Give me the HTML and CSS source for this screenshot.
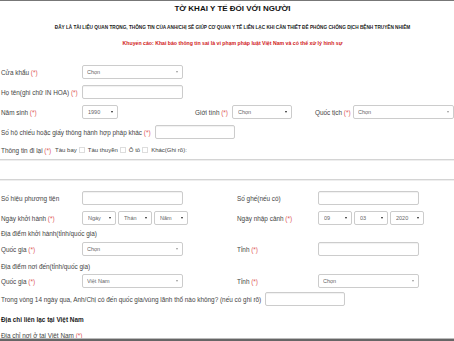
FILE: index.html
```html
<!DOCTYPE html>
<html lang="vi">

<head>
    <meta charset="UTF-8">
    <meta name="viewport" content="width=device-width, initial-scale=1.0">
    <title>Tờ khai y tế</title>
    <link rel="stylesheet" href="styles.css">
</head>

<body>
<div class="wrap">
    <h1 class="title">TỜ KHAI Y TẾ ĐỐI VỚI NGƯỜI</h1>
    <p class="note">ĐÂY LÀ TÀI LIỆU QUAN TRỌNG, THÔNG TIN CỦA ANH/CHỊ SẼ GIÚP CƠ QUAN Y TẾ LIÊN LẠC KHI CẦN THIẾT ĐỂ PHÒNG CHỐNG DỊCH BỆNH TRUYỀN NHIỄM</p>
    <p class="warn">Khuyến cáo: Khai báo thông tin sai là vi phạm pháp luật Việt Nam và có thể xử lý hình sự</p>

    <div class="form">
        <div class="row">
            <label class="lbl">Cửa khẩu <i>(*)</i></label>
            <div class="sel big light"><select><option>Chọn</option></select></div>
        </div>
        <div class="row">
            <label class="lbl">Họ tên(ghi chữ IN HOA) <i>(*)</i></label>
            <input class="txt" type="text">
        </div>
        <div class="row">
            <label class="lbl">Năm sinh <i>(*)</i></label>
            <div class="sel year"><select><option>1990</option></select></div>
            <label class="lbl gender">Giới tính <i>(*)</i></label>
            <div class="sel mid"><select><option>Chọn</option></select></div>
            <label class="lbl nation">Quốc tịch <i>(*)</i></label>
            <div class="sel big light"><select><option>Chọn</option></select></div>
        </div>
        <div class="row">
            <label class="lbl auto">Số hộ chiếu hoặc giấy thông hành hợp pháp khác <i>(*)</i></label>
            <input class="txt short" type="text">
        </div>
        <div class="row travel">
            <label class="lbl auto">Thông tin đi lại <i>(*)</i></label>
            <span class="opt">Tàu bay <input type="checkbox"></span>
            <span class="opt">Tàu thuyền <input type="checkbox"></span>
            <span class="opt">Ô tô <input type="checkbox"></span>
            <span class="opt">Khác(Ghi rõ):</span>
        </div>
        <hr class="line">
        <hr class="line second">

        <div class="row">
            <div class="half">
                <label class="lbl">Số hiệu phương tiện</label>
                <input class="txt" type="text">
            </div>
            <label class="lbl">Số ghế(nếu có)</label>
            <input class="txt" type="text">
        </div>
        <div class="row">
            <div class="half">
                <label class="lbl">Ngày khởi hành <i>(*)</i></label>
                <div class="dates">
                    <div class="sel day"><select><option>Ngày</option></select></div>
                    <div class="sel day"><select><option>Thán</option></select></div>
                    <div class="sel day"><select><option>Năm</option></select></div>
                </div>
            </div>
            <label class="lbl">Ngày nhập cảnh <i>(*)</i></label>
            <div class="dates">
                <div class="sel day"><select><option>09</option></select></div>
                <div class="sel day"><select><option>03</option></select></div>
                <div class="sel day"><select><option>2020</option></select></div>
            </div>
        </div>
        <div class="row caption">Địa điểm khởi hành(tỉnh/quốc gia)</div>
        <div class="row">
            <div class="half">
                <label class="lbl">Quốc gia <i>(*)</i></label>
                <div class="sel big light"><select><option>Chọn</option></select></div>
            </div>
            <label class="lbl">Tỉnh <i>(*)</i></label>
            <input class="txt" type="text">
        </div>
        <div class="row caption tall">Địa điểm nơi đến(tỉnh/quốc gia)</div>
        <div class="row mid-row">
            <div class="half">
                <label class="lbl">Quốc gia <i>(*)</i></label>
                <div class="sel big light"><select><option>Việt Nam</option></select></div>
            </div>
            <label class="lbl">Tỉnh <i>(*)</i></label>
            <div class="sel big light"><select><option>Chọn</option></select></div>
        </div>
        <div class="row">
            <label class="lbl auto">Trong vòng 14 ngày qua, Anh/Chị có đến quốc gia/vùng lãnh thổ nào không? (nếu có ghi rõ)</label>
            <input class="txt short" type="text">
        </div>
        <div class="row section">Địa chỉ liên lạc tại Việt Nam</div>
        <div class="row last">
            <label class="lbl auto">Địa chỉ nơi ở tại Việt Nam <i>(*)</i></label>
        </div>
    </div>
</div>
<div class="bottombar"></div>
</body>

</html>
```

FILE: styles.css
```css
* {
    margin: 0;
    padding: 0;
    box-sizing: border-box;
}

html {
    border-top: 1px solid #777;
}

body {
    font-family: "Liberation Sans", Arial, sans-serif;
    font-size: 6.4px;
    color: #444;
    background: #fff;
    overflow: hidden;
    height: 340px;
}

.wrap {
    width: 464px;
    padding-left: 1px;
}

.title {
    margin-top: 3px;
    font-size: 8px;
    line-height: 10px;
    text-align: center;
    color: #111;
}

.note {
    margin-top: 10px;
    font-size: 4.7px;
    line-height: 8px;
    font-weight: bold;
    text-align: center;
    color: #222;
}

.warn {
    margin-top: 7px;
    font-size: 5.2px;
    line-height: 8px;
    font-weight: bold;
    text-align: center;
    color: #d01818;
}

.form {
    margin-top: 15px;
}

.row {
    display: flex;
    align-items: center;
    height: 20px;
}

.row.travel {
    height: 16px;
}

.row.caption {
    height: 11px;
}

.row.caption.tall {
    height: 14px;
}

.row.mid-row {
    height: 16px;
}

.row.section {
    font-weight: bold;
    color: #222;
}

.row.last {
    height: 12px;
}

.half {
    display: flex;
    align-items: center;
    width: 236px;
}

.lbl {
    width: 81px;
    flex-shrink: 0;
    white-space: nowrap;
}

.lbl i {
    font-style: normal;
    color: #e05a5a;
}

.lbl.auto {
    width: auto;
    margin-right: 4px;
}

.lbl.gender {
    width: 37px;
    margin-left: 77px;
}

.lbl.nation {
    width: 38px;
    margin-left: 23px;
}

.txt {
    width: 101px;
    height: 14px;
    border: 1px solid #ccc;
    border-radius: 2px;
    box-shadow: inset 0 1px 1px rgba(0, 0, 0, 0.06);
    flex-shrink: 0;
}

.txt.short {
    width: 80px;
}

.sel {
    position: relative;
    height: 14px;
    flex-shrink: 0;
}

.sel select {
    appearance: none;
    width: 100%;
    height: 100%;
    border: 1px solid #ccc;
    border-radius: 2px;
    background: #fff;
    font-family: inherit;
    font-size: 5.5px;
    color: #666;
    padding-left: 5px;
}

.sel::after {
    content: "";
    position: absolute;
    right: 5px;
    top: 6px;
    border-left: 1.5px solid transparent;
    border-right: 1.5px solid transparent;
    border-top: 2.5px solid #222;
    pointer-events: none;
}

.sel.light::after {
    border-top-color: #999;
}

.sel.big {
    width: 101px;
}

.sel.big select {
    padding-left: 4px;
}

.sel.year {
    width: 36px;
}

.sel.mid {
    width: 60px;
}

.sel.day {
    width: 34px;
}

.dates {
    display: flex;
    gap: 2px;
}

.opt {
    display: flex;
    align-items: center;
    margin-right: 3px;
    font-size: 6px;
}

.opt input {
    appearance: none;
    width: 6px;
    height: 6px;
    border: 1px solid #ddd;
    margin-left: 2px;
}

.line {
    border: 0;
    border-top: 1px solid #d4d4d4;
    box-shadow: 0 1px 0 #eee;
    margin-top: 1px;
    width: 454px;
    margin-left: -1px;
}

.line.second {
    margin-top: 19px;
    margin-bottom: 8px;
}

.bottombar {
    position: fixed;
    left: 0;
    right: 0;
    bottom: 0;
    height: 3px;
    background: #666;
    border-top: 1px solid #bbb;
}
```
